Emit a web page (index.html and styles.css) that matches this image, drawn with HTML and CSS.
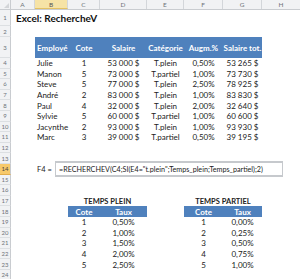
FILE: index.html
```html
<!DOCTYPE html>
<html lang="fr">
<head>
<meta charset="utf-8">
<link rel="stylesheet" href="styles.css">
</head>
<body>
<div class="sheet">
  <div class="row colhdr">
    <div class="corner"><div class="tri"></div></div>
    <div class="ch wa">A</div><div class="ch wb sel">B</div><div class="ch wc">C</div><div class="ch wd">D</div><div class="ch we">E</div><div class="ch wf">F</div><div class="ch wg">G</div><div class="ch wh">H</div>
  </div>
  <div class="row r1"><div class="rh">1</div><div class="c title">Excel: RechercheV</div></div>
  <div class="row r2"><div class="rh">2</div></div>
  <div class="row r3">
    <div class="rh">3</div><div class="c wa"></div>
    <div class="c wb th left">Employé</div><div class="c wc th">Cote</div><div class="c wd th">Salaire</div><div class="c we th">Catégorie</div><div class="c wf th">Augm.%</div><div class="c wg th">Salaire tot.</div>
  </div>
  <div class="row rn"><div class="rh">4</div><div class="c wa"></div><div class="c wb left">Julie</div><div class="c wc">1</div><div class="c wd">53 000 $</div><div class="c we">T.plein</div><div class="c wf">0,50%</div><div class="c wg">53 265 $</div></div>
  <div class="row rn"><div class="rh">5</div><div class="c wa"></div><div class="c wb left">Manon</div><div class="c wc">5</div><div class="c wd">73 000 $</div><div class="c we">T.partiel</div><div class="c wf">1,00%</div><div class="c wg">73 730 $</div></div>
  <div class="row rn"><div class="rh">6</div><div class="c wa"></div><div class="c wb left">Steve</div><div class="c wc">5</div><div class="c wd">77 000 $</div><div class="c we">T.plein</div><div class="c wf">2,50%</div><div class="c wg">78 925 $</div></div>
  <div class="row rn"><div class="rh">7</div><div class="c wa"></div><div class="c wb left">André</div><div class="c wc">2</div><div class="c wd">83 000 $</div><div class="c we">T.plein</div><div class="c wf">1,00%</div><div class="c wg">83 830 $</div></div>
  <div class="row rn"><div class="rh">8</div><div class="c wa"></div><div class="c wb left">Paul</div><div class="c wc">4</div><div class="c wd">32 000 $</div><div class="c we">T.plein</div><div class="c wf">2,00%</div><div class="c wg">32 640 $</div></div>
  <div class="row rn"><div class="rh">9</div><div class="c wa"></div><div class="c wb left">Sylvie</div><div class="c wc">5</div><div class="c wd">60 000 $</div><div class="c we">T.partiel</div><div class="c wf">1,00%</div><div class="c wg">60 600 $</div></div>
  <div class="row rn"><div class="rh">10</div><div class="c wa"></div><div class="c wb left">Jacynthe</div><div class="c wc">2</div><div class="c wd">93 000 $</div><div class="c we">T.plein</div><div class="c wf">1,00%</div><div class="c wg">93 930 $</div></div>
  <div class="row rn"><div class="rh">11</div><div class="c wa"></div><div class="c wb left">Marc</div><div class="c wc">3</div><div class="c wd">39 000 $</div><div class="c we">T.partiel</div><div class="c wf">0,50%</div><div class="c wg">39 195 $</div></div>
  <div class="row rn"><div class="rh">12</div></div>
  <div class="row rn"><div class="rh">13</div></div>
  <div class="row rn"><div class="rh sel">14</div><div class="c wa"></div><div class="c label">F4 =</div><div class="formula">=RECHERCHEV(C4;SI(E4="t.plein";Temps_plein;Temps_partiel);2)</div></div>
  <div class="row rn"><div class="rh">15</div></div>
  <div class="row rn"><div class="rh">16</div></div>
  <div class="row rn"><div class="rh">17</div><div class="c wa"></div><div class="c wb"></div><div class="c wcd ttl">TEMPS PLEIN</div><div class="c we"></div><div class="c wfg ttl">TEMPS PARTIEL</div></div>
  <div class="row rn"><div class="rh">18</div><div class="c wa"></div><div class="c wb"></div><div class="c wc th">Cote</div><div class="c wd th">Taux</div><div class="c we"></div><div class="c wf th">Cote</div><div class="c wg th">Taux</div></div>
  <div class="row rn"><div class="rh">19</div><div class="c wa"></div><div class="c wb"></div><div class="c wc">1</div><div class="c wd">0,50%</div><div class="c we"></div><div class="c wf">1</div><div class="c wg">0,00%</div></div>
  <div class="row rn"><div class="rh">20</div><div class="c wa"></div><div class="c wb"></div><div class="c wc">2</div><div class="c wd">1,00%</div><div class="c we"></div><div class="c wf">2</div><div class="c wg">0,25%</div></div>
  <div class="row rn"><div class="rh">21</div><div class="c wa"></div><div class="c wb"></div><div class="c wc">3</div><div class="c wd">1,50%</div><div class="c we"></div><div class="c wf">3</div><div class="c wg">0,50%</div></div>
  <div class="row rn"><div class="rh">22</div><div class="c wa"></div><div class="c wb"></div><div class="c wc">4</div><div class="c wd">2,00%</div><div class="c we"></div><div class="c wf">4</div><div class="c wg">0,75%</div></div>
  <div class="row rn"><div class="rh">23</div><div class="c wa"></div><div class="c wb"></div><div class="c wc">5</div><div class="c wd">2,50%</div><div class="c we"></div><div class="c wf">5</div><div class="c wg">1,00%</div></div>
  <div class="row rn"><div class="rh">24</div></div>
</div>
</body>
</html>
```
FILE: styles.css
```css
* { box-sizing: border-box; }
body { margin: 0; background: #fff; font-family: Lato, "Liberation Sans", sans-serif; }
.sheet { width: 300px; height: 279px; overflow: hidden; background: #fff; }
.row { display: flex; align-items: center; flex: none; }
.colhdr { height: 10px; background: #f1f2f4; border-bottom: 1px solid #c9ccd0; }
.r1 { height: 16px; align-items: flex-end; }
.r2 { height: 11px; }
.r3 { height: 21px; }
.rn { height: 10.6px; }
.corner { width: 11px; height: 100%; border-right: 1px solid #c9ccd0; position: relative; flex: none; }
.tri { position: absolute; right: 1px; bottom: 1px; width: 0; height: 0; border-left: 5px solid transparent; border-bottom: 5px solid #d3d5d8; }
.ch { height: 100%; border-right: 1px solid #d3d6da; font-size: 6.5px; color: #6e737a; display: flex; align-items: center; justify-content: center; flex: none; }
.ch.sel { background: #f6e3a6; color: #555; border-bottom: 1px solid #e3c163; }
.rh { width: 11px; height: 100%; flex: none; background: #f1f2f4; border-right: 1px solid #c9ccd0; border-bottom: 1px solid #dcdfe2; font-size: 6px; color: #6e737a; display: flex; align-items: center; justify-content: center; }
.rh.sel { background: #f7c96a; color: #444; border-bottom-color: #e2ad4b; }
.c { flex: none; font-size: 8px; color: #222; white-space: nowrap; text-align: center; height: 100%; display: flex; align-items: center; justify-content: center; }
.left { justify-content: flex-start; padding-left: 2px; }
.wa { width: 24px; }
.wb { width: 33px; }
.wc { width: 32px; }
.wd { width: 47px; }
.we { width: 37px; }
.wf { width: 39px; }
.wg { width: 39px; }
.wh { width: 39px; }
.wcd { width: 79px; }
.wfg { width: 78px; }
.title { font-size: 10px; font-weight: bold; color: #111; padding-left: 5px; padding-bottom: 2px; align-items: flex-end; }
.th { background: #4f81bd; color: #fff; font-weight: bold; }
.ttl { font-weight: bold; color: #222; font-size: 7.5px; align-items: flex-end; }
.label { width: 20px; justify-content: flex-start; padding-left: 2px; font-size: 7.5px; }
.formula { flex: none; width: 228px; height: 16px; border-top: 2px solid #c6c9cd; border-bottom: 2px solid #c6c9cd; border-left: 1px solid #c6c9cd; border-right: 1px solid #c6c9cd; font-size: 7.2px; color: #222; white-space: nowrap; display: flex; align-items: center; padding-left: 3px; background: #fff; }
```
